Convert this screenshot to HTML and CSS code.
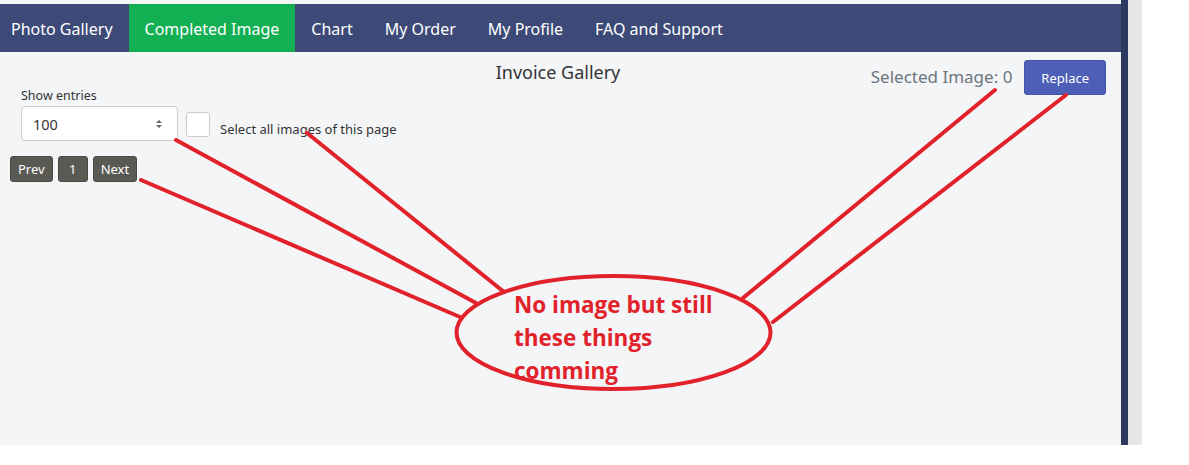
FILE: index.html
```html
<!DOCTYPE html>
<html lang="en">
<head>
<meta charset="UTF-8">
<title>Invoice Gallery</title>
<link rel="stylesheet" href="styles.css">
</head>
<body>

<div class="frame">
    <div class="app">
        <nav class="topnav">
            <a class="first">Photo Gallery</a>
            <a class="active">Completed Image</a>
            <a>Chart</a>
            <a>My Order</a>
            <a>My Profile</a>
            <a>FAQ and Support</a>
        </nav>

        <div class="content">
            <div class="header">
                <div class="entries">
                    <label>Show entries</label>
                    <div class="entries-row">
                        <div class="select">
                            <span>100</span>
                            <svg width="8" height="12" viewBox="0 0 8 12">
                                <path d="M1 5 L4 2 L7 5 Z M1 7 L4 10 L7 7 Z" fill="#666"/>
                            </svg>
                        </div>
                        <span class="checkbox"></span>
                        <span class="check-label">Select all images of this page</span>
                    </div>
                </div>
                <h2>Invoice Gallery</h2>
                <div class="actions">
                    <span class="selected">Selected Image: 0</span>
                    <button class="replace">Replace</button>
                </div>
            </div>

            <div class="pager">
                <button>Prev</button>
                <button class="num">1</button>
                <button>Next</button>
            </div>
        </div>
    </div>
    <div class="edge"></div>
    <div class="rail"></div>
</div>

<!-- red hand-drawn annotation -->
<svg class="annot" width="1189" height="465" viewBox="0 0 1189 465">
    <g stroke="#e2222b" stroke-width="4" fill="none" stroke-linecap="round">
        <line x1="141" y1="180" x2="460" y2="317"/>
        <line x1="176" y1="140" x2="476" y2="303"/>
        <line x1="307" y1="133" x2="504" y2="292"/>
        <line x1="995" y1="90" x2="743" y2="298"/>
        <line x1="1066" y1="95" x2="773" y2="322"/>
        <ellipse cx="613.5" cy="332.5" rx="157" ry="56.5"/>
    </g>
</svg>
<div class="note">No image but still<br>these things<br>comming</div>

</body>
</html>
```

FILE: styles.css
```css
body {
    margin: 0;
    font-family: "Noto Sans", "Open Sans", sans-serif;
    background: #ffffff;
}

.frame {
    display: flex;
    height: 445px;
    width: 1142px;
}

.app {
    width: 1121px;
    background: #f4f5f7;
    padding-top: 4px;
    box-sizing: border-box;
}

.edge { width: 7px; background: #2b3a5e; }
.rail { width: 14px; background: #e4e6e8; }

/* Top navigation */
.topnav {
    display: flex;
    height: 48px;
    background: #3d4a77;
}

.topnav a {
    display: flex;
    align-items: center;
    padding: 2px 16px 0;
    color: #ffffff;
    font-size: 16px;
}

.topnav a.first { padding-left: 11px; }
.topnav a.active { background: #12b052; }

/* Content */
.content {
    padding: 8px 15px 0 10px;
}

.header {
    display: grid;
    grid-template-columns: 1fr auto 1fr;
    align-items: start;
}

h2 {
    margin: 0;
    font-size: 18px;
    font-weight: normal;
    color: #333;
    line-height: 25px;
}

.entries {
    padding: 28px 0 0 11px;
}

.entries label {
    display: block;
    font-size: 12.5px;
    color: #333;
    line-height: 16px;
}

.entries-row {
    display: flex;
    align-items: center;
    margin-top: 2px;
}

.select {
    width: 157px;
    height: 35px;
    box-sizing: border-box;
    background: #fff;
    border: 1px solid #ccc;
    border-radius: 4px;
    display: flex;
    align-items: center;
    justify-content: space-between;
    padding: 0 14px 0 11px;
    font-size: 14.5px;
    color: #333;
}

.checkbox {
    width: 24px;
    height: 25px;
    box-sizing: border-box;
    background: #fff;
    border: 1px solid #ccc;
    border-radius: 3px;
    margin: 2px 10px 0 8px;
}

.check-label {
    font-size: 13px;
    color: #333;
    margin-top: 10px;
}

.actions {
    display: flex;
    justify-content: flex-end;
    align-items: center;
    gap: 10px;
}

.selected {
    font-size: 17px;
    color: #6c757d;
    margin-bottom: 3px;
}

.replace {
    height: 35px;
    padding: 0 16px;
    margin-left: 2px;
    background: #4e5fb8;
    color: #fff;
    border: 1px solid #4454a8;
    border-radius: 3px;
    font-family: inherit;
    font-size: 13px;
}

.pager {
    display: flex;
    gap: 5px;
    margin-top: 15px;
}

.pager button {
    height: 26px;
    padding: 0 7px;
    background: #5a5a54;
    color: #fff;
    border: 1px solid #4a4a45;
    border-radius: 3px;
    font-family: inherit;
    font-size: 13px;
}

.pager button.num { width: 30px; }

/* Annotation overlay */
.annot {
    position: absolute;
    left: 0;
    top: 0;
}

.note {
    position: absolute;
    left: 514px;
    top: 288px;
    font-family: "Open Sans", sans-serif;
    font-weight: bold;
    font-size: 22.5px;
    line-height: 33px;
    color: #e2222b;
}
```
